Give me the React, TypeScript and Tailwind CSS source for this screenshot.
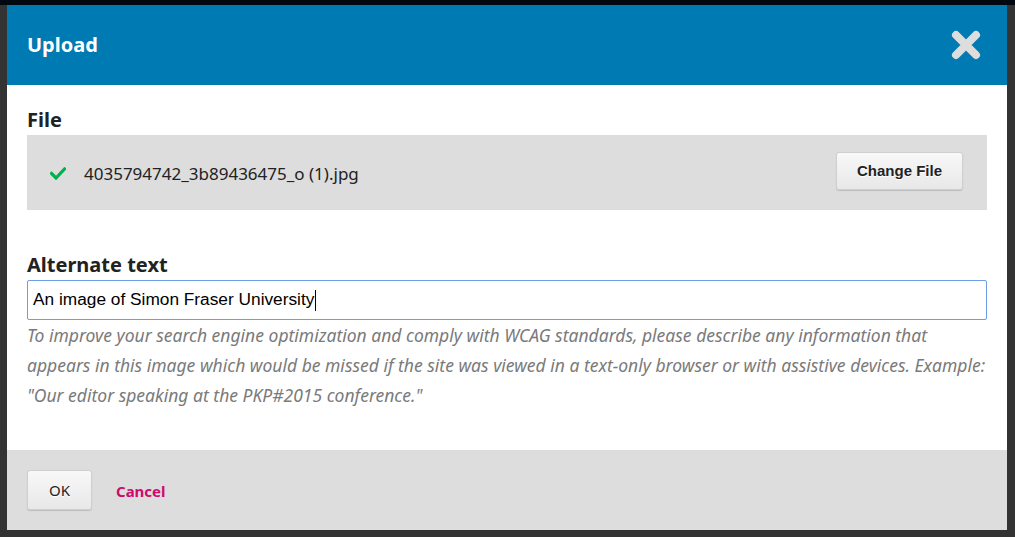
const noto = { fontFamily: '"Noto Sans", "Open Sans", sans-serif' };
const arial = { fontFamily: '"Liberation Sans", Arial, sans-serif' };

const CloseIcon = () => (
  <svg width="30" height="30" viewBox="0 0 30 30" aria-hidden="true">
    <path d="M5 5 L25 25 M25 5 L5 25" stroke="#dddddd" strokeWidth="8" strokeLinecap="round" fill="none" />
  </svg>
);

const CheckIcon = () => (
  <svg width="16" height="13" viewBox="0 0 16 13" aria-hidden="true">
    <path d="M1.5 6.5 L6 11 L14.5 2" stroke="#00b24e" strokeWidth="3.2" strokeLinecap="square" fill="none" />
  </svg>
);

const UploadModal = () => (
  <div className="w-[1000px] bg-white flex flex-col">
    <div className="h-[80px] bg-[#007ab2] flex items-center justify-between pl-5 pr-[26px]">
      <h1 className="text-[20px] font-bold text-white" style={noto}>
        Upload
      </h1>
      <CloseIcon />
    </div>

    <div className="px-5 pt-5 pb-10" style={noto}>
      <div className="text-[20px] leading-[30px] font-bold text-[#222]">File</div>
      <div className="h-[75px] bg-[#dddddd] flex items-center justify-between pl-[23px] pr-6">
        <div className="flex items-center gap-[18px] pt-[2px]">
          <CheckIcon />
          <span className="text-[17px] text-[#222]">4035794742_3b89436475_o (1).jpg</span>
        </div>
        <button
          className="h-[38px] w-[127px] mb-[3px] rounded-[3px] border border-[#cfcfcf] bg-gradient-to-b from-[#f8f8f8] to-[#e8e8e8] shadow-[0_1px_1px_rgba(0,0,0,0.15)] text-[15px] font-semibold text-[#222] [text-shadow:0_1px_0_#fff]"
          style={arial}
        >
          Change File
        </button>
      </div>

      <div className="mt-10 text-[20px] leading-[30px] font-bold text-[#222]">Alternate text</div>
      <div className="h-[40px] border border-[#6b9ee4] rounded-[2px] flex items-center px-[5px]" style={arial}>
        <span className="text-[17.3px] text-black">An image of Simon Fraser University</span>
        <span className="w-px h-[21px] bg-black ml-px" />
      </div>
      <p className="text-[17.5px] leading-[30px] italic text-[#7a7a7a] whitespace-nowrap">
        To improve your search engine optimization and comply with WCAG standards, please describe any information that
        <br />
        appears in this image which would be missed if the site was viewed in a text-only browser or with assistive devices. Example:
        <br />
        "Our editor speaking at the PKP#2015 conference."
      </p>
    </div>

    <div className="h-[80px] bg-[#dddddd] flex items-center px-5 gap-6">
      <button
        className="h-[40px] w-[65px] rounded-[3px] border border-[#cfcfcf] bg-gradient-to-b from-[#f8f8f8] to-[#e8e8e8] shadow-[0_1px_1px_rgba(0,0,0,0.15)] text-[15px] text-[#222] [text-shadow:0_1px_0_#fff]"
        style={noto}
      >
        OK
      </button>
      <a className="text-[15px] font-bold text-[#d00a6c] pt-[2px]" style={noto}>
        Cancel
      </a>
    </div>
  </div>
);

export default function App() {
  return (
    <div className="w-[1015px] h-[537px] bg-[#333333] overflow-hidden flex flex-col">
      <div className="h-[5px] bg-[#01080f] shrink-0" />
      <div className="pl-[7px]">
        <UploadModal />
      </div>
    </div>
  );
}
